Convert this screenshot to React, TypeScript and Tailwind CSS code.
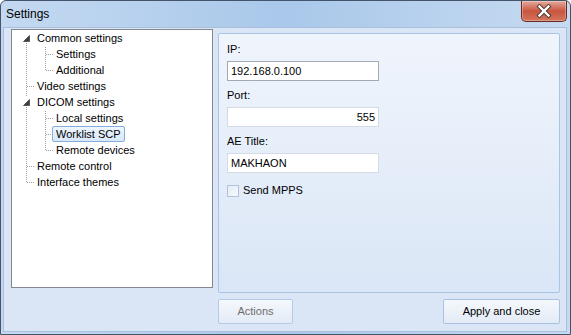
import React from 'react';

const font = "font-['Liberation_Sans',Arial,sans-serif]";

type Node = { label: string; level: 0 | 1; expanded?: boolean; selected?: boolean };

const nodes: Node[] = [
    { label: 'Common settings', level: 0, expanded: true },
    { label: 'Settings', level: 1 },
    { label: 'Additional', level: 1 },
    { label: 'Video settings', level: 0 },
    { label: 'DICOM settings', level: 0, expanded: true },
    { label: 'Local settings', level: 1 },
    { label: 'Worklist SCP', level: 1, selected: true },
    { label: 'Remote devices', level: 1 },
    { label: 'Remote control', level: 0 },
    { label: 'Interface themes', level: 0 },
];

// dotted connector lines + expand arrows of the tree
const TreeLines: React.FC = () => {
    const dot = { stroke: '#a0a0a0', strokeWidth: 1, strokeDasharray: '1 1' };
    const hLine = (x: number, y: number) => <line x1={x} y1={y + 0.5} x2={x + 8} y2={y + 0.5} {...dot} />;
    return (
        <svg className="absolute left-0 top-0 pointer-events-none" width="200" height="170">
            <line x1="14.5" y1="13" x2="14.5" y2="153" {...dot} />
            <line x1="33.5" y1="17" x2="33.5" y2="40" {...dot} />
            <line x1="33.5" y1="81" x2="33.5" y2="120" {...dot} />
            {hLine(15, 56)}
            {hLine(15, 136)}
            {hLine(15, 152)}
            {hLine(34, 24)}
            {hLine(34, 40)}
            {hLine(34, 88)}
            {hLine(34, 104)}
            {hLine(34, 120)}
            {[0, 64].map((y) => (
                <g key={y}>
                    <rect x="10" y={y + 3} width="10" height="10" fill="white" />
                    <polygon points={`17.5,${y + 5.5} 17.5,${y + 11.5} 11.5,${y + 11.5}`} fill="#404040" stroke="#262626" strokeWidth="0.6" />
                </g>
            ))}
        </svg>
    );
};

const CloseButton: React.FC = () => (
    <div className="w-[46px] h-[21px] rounded-b-[5px] border border-t-0 border-[#6a2a22] bg-gradient-to-b from-[#e3aa9f] via-[#c9553d] to-[#d4745c] flex items-center justify-center shadow-[inset_0_0_0_1px_rgba(255,255,255,0.3)]">
        <svg width="16" height="14" viewBox="0 0 16 14">
            <path d="M3.5 2.5 L12.5 11.5 M12.5 2.5 L3.5 11.5" stroke="#4a3430" strokeWidth="4.2" strokeLinecap="square" />
            <path d="M3.5 2.5 L12.5 11.5 M12.5 2.5 L3.5 11.5" stroke="#ffffff" strokeWidth="2.4" strokeLinecap="square" />
        </svg>
    </div>
);

const Field: React.FC<{ label: string; value: string; right?: boolean; focused?: boolean; first?: boolean }> = ({ label, value, right, focused, first }) => (
    <>
        <div className={`h-[16px] leading-[18px] text-[11px] text-black ${first ? '' : 'mt-[5px]'}`}>{label}</div>
        <div
            className={`mt-[5px] w-[152px] h-[20px] bg-white border px-[3px] flex items-center text-[11px] text-black ${
                focused ? 'border-[#a3aab5]' : 'border-[#d3dbe6]'
            } ${right ? 'justify-end' : ''}`}
        >
            {value}
        </div>
    </>
);

const App: React.FC = () => {
    return (
        <div className={`w-[571px] h-[335px] overflow-hidden ${font}`}>
            <div className="w-full h-full flex flex-col border border-[#44546a] rounded-t-[6px] bg-gradient-to-r from-[#c4d9f1] via-[#a9c8ea] to-[#c6daf1] px-[2px] pr-[3px] pb-[2px]">
                {/* Title bar */}
                <div className="h-[26px] flex items-start justify-between">
                    <span className="pl-[3px] pt-[6px] text-[12px] text-black leading-[15px]">Settings</span>
                    <CloseButton />
                </div>

                {/* Client area */}
                <div className="flex-1 bg-[#dae6f6] border border-[#a9bfdb] flex gap-[5px] pl-[7px] pt-[1px]">
                    {/* Tree */}
                    <div className="relative w-[202px] h-[259px] bg-white border border-[#828790]">
                        <TreeLines />
                        <div className="relative flex flex-col">
                            {nodes.map((n) => (
                                <div key={n.label} className={`h-[16px] flex items-center ${n.level === 0 ? 'pl-[21px]' : 'pl-[40px]'}`}>
                                    <span
                                        className={`h-[16px] leading-[14px] px-[3px] text-[11px] text-black rounded-[2px] border ${
                                            n.selected ? 'border-[#84acdd] bg-gradient-to-b from-[#eef5fd] to-[#d9e8fa]' : 'border-transparent'
                                        }`}
                                    >
                                        {n.label}
                                    </span>
                                </div>
                            ))}
                        </div>
                    </div>

                    {/* Right side */}
                    <div className="w-[342px] flex flex-col pt-[4px]">
                        <div className="h-[260px] border border-[#a8c4e8] rounded-[2px] bg-gradient-to-b from-[#f0f5fc] to-[#dae6f6] pl-[8px] pt-[6px] flex flex-col">
                            <Field label="IP:" value="192.168.0.100" focused first />
                            <Field label="Port:" value="555" right />
                            <Field label="AE Title:" value="MAKHAON" />
                            <div className="mt-[10px] flex items-center gap-[4px]">
                                <div className="w-[12px] h-[12px] border border-[#b2c3d9] bg-gradient-to-br from-[#e4ecf6] to-[#f7fafd]" />
                                <span className="text-[11px] text-black leading-[15px]">Send MPPS</span>
                            </div>
                        </div>

                        <div className="mt-[6px] flex justify-between">
                            <button className="w-[75px] h-[25px] border border-[#b3cbe8] rounded-[2px] bg-gradient-to-b from-[#f5f8fc] to-[#e3ebf6] text-[11px] text-[#6d6d6d]">
                                Actions
                            </button>
                            <button className="w-[117px] h-[25px] border border-[#a9c2e2] rounded-[2px] bg-gradient-to-b from-[#f5f8fc] to-[#e3ebf6] text-[11px] text-black">
                                Apply and close
                            </button>
                        </div>
                    </div>
                </div>
            </div>
        </div>
    );
};

export default App;
